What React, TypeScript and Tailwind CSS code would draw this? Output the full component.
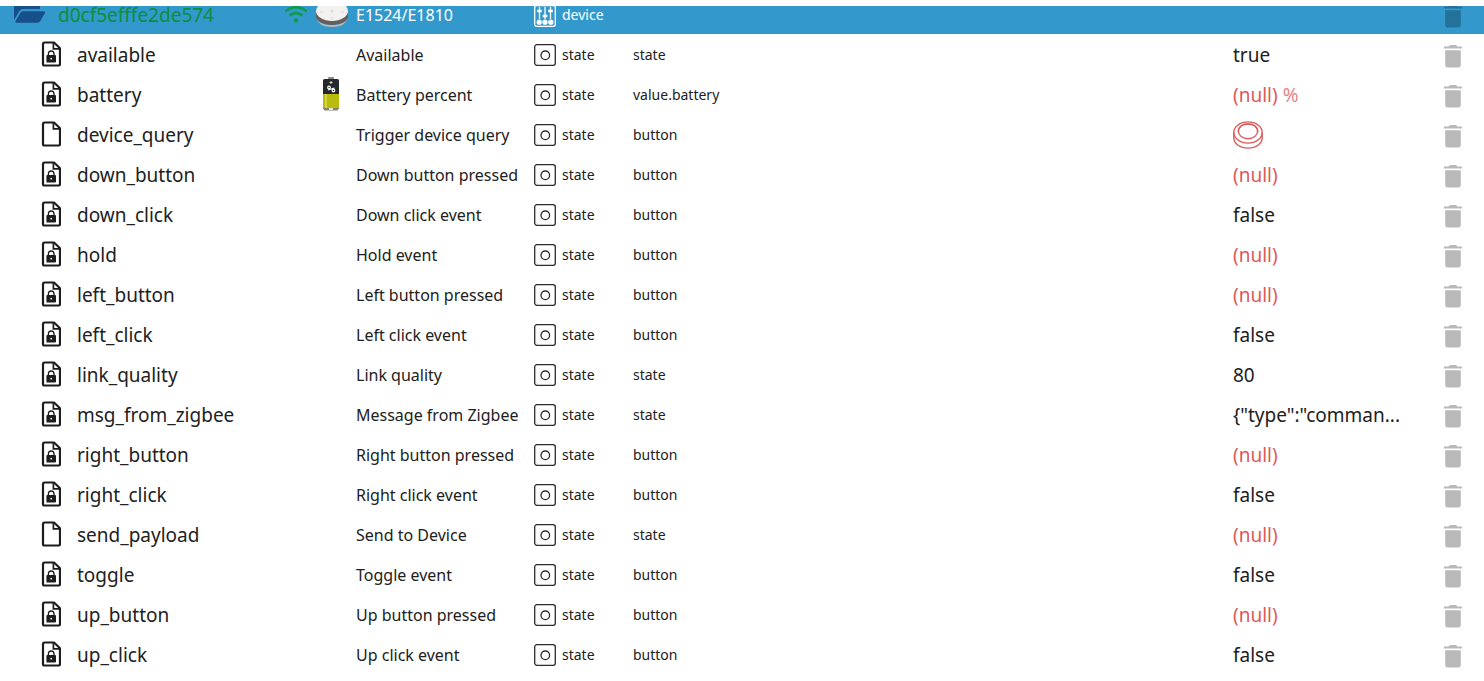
import clsx from "clsx";

type StateRow = {
    id: string;
    name: string;
    role: string;
    value: string | null;
    unit?: string;
    writable?: boolean;
    isButton?: boolean;
    battery?: boolean;
};

const rows: StateRow[] = [
    { id: "available", name: "Available", role: "state", value: "true" },
    { id: "battery", name: "Battery percent", role: "value.battery", value: null, unit: "%", battery: true },
    { id: "device_query", name: "Trigger device query", role: "button", value: null, writable: true, isButton: true },
    { id: "down_button", name: "Down button pressed", role: "button", value: null },
    { id: "down_click", name: "Down click event", role: "button", value: "false" },
    { id: "hold", name: "Hold event", role: "button", value: null },
    { id: "left_button", name: "Left button pressed", role: "button", value: null },
    { id: "left_click", name: "Left click event", role: "button", value: "false" },
    { id: "link_quality", name: "Link quality", role: "state", value: "80" },
    { id: "msg_from_zigbee", name: "Message from Zigbee", role: "state", value: '{"type":"comman...' },
    { id: "right_button", name: "Right button pressed", role: "button", value: null },
    { id: "right_click", name: "Right click event", role: "button", value: "false" },
    { id: "send_payload", name: "Send to Device", role: "state", value: null, writable: true },
    { id: "toggle", name: "Toggle event", role: "button", value: "false" },
    { id: "up_button", name: "Up button pressed", role: "button", value: null },
    { id: "up_click", name: "Up click event", role: "button", value: "false" },
];

function FileIcon({ locked }: { locked: boolean }) {
    return (
        <svg width="20" height="26" viewBox="0 0 20 26" fill="none" className="shrink-0">
            <path d="M3.500 1.500h9.500l6 5.800V23a1.500 1.500 0 0 1-1.500 1.500h-14A1.500 1.500 0 0 1 2 23V3a1.500 1.500 0 0 1 1.500-1.500Z" stroke="#1c1c1c" strokeWidth="2.200" />
            <path d="M12.400 1.500v6.300H19" stroke="#1c1c1c" strokeWidth="1.700" />
            {locked && (
                <>
                    <path d="M7.400 14.500V13a2.800 3 0 0 1 5.600 0v1.500" stroke="#1c1c1c" strokeWidth="1.300" />
                    <rect x="5.400" y="14" width="9.600" height="7.400" rx="1" fill="#1c1c1c" />
                    <circle cx="10.200" cy="17.700" r=".9" fill="#fff" />
                </>
            )}
        </svg>
    );
}

function FolderIcon() {
    return (
        <svg width="32" height="24" viewBox="0 0 32 24" fill="#164f8a" className="shrink-0">
            <path d="M0 3a2 2 0 0 1 2-2h8l3 3h11a2 2 0 0 1 2 2v3H9a4 4 0 0 0-3.500 2L0 20Z" />
            <path d="M9.800 11.200h20.200a1.200 1.200 0 0 1 1 1.800l-5 8.600a2.400 2.400 0 0 1-2 1.100H2.600a1.200 1.200 0 0 1-1.100-1.800l5.200-8.300a3.400 3.400 0 0 1 3.100-1.400Z" />
        </svg>
    );
}

function WifiIcon() {
    return (
        <svg width="24" height="20" viewBox="0 0 24 20" fill="none" stroke="#0f9a4a" strokeWidth="2.600" className="shrink-0">
            <path d="M1.500 7.400a15 15 0 0 1 21 0" />
            <path d="M5.600 11.700a9.200 9.200 0 0 1 12.800 0" />
            <circle cx="12" cy="16.500" r="2.200" fill="#0f9a4a" stroke="none" />
        </svg>
    );
}

function RemoteImage() {
    return (
        <svg width="34" height="30" viewBox="0 2 34 30" className="shrink-0">
            <path d="M1 15v6c1 5 8 8 16 8s15-3 16-8v-6Z" fill="#645e5c" />
            <path d="M2 23c2 4 8 6 15 6s13-2 15-6c-1 5-7 8-15 8S3 28 2 23Z" fill="#bdb8b5" />
            <ellipse cx="17" cy="15" rx="16" ry="10" fill="#f3f1ef" />
            <circle cx="17" cy="15" r="1.600" fill="#dedcda" />
            <path d="M5 16h3M26 16h3M17 21v2" stroke="#d5d2d0" />
        </svg>
    );
}

function BatteryImage() {
    return (
        <svg width="16" height="34" viewBox="0 0 16 34">
            <rect x="5" y="0" width="6" height="4" rx="1" fill="#8c8c8c" />
            <rect x="0" y="2" width="16" height="30" rx="1.500" fill="#25272a" />
            <rect x="0" y="17" width="16" height="14" fill="#b9bc0c" />
            <path d="M3 17v14" stroke="#d3d53a" strokeWidth="2" />
            <rect x="1" y="31" width="14" height="2.400" rx="1" fill="#85836a" />
            <rect x="6" y="31" width="4" height="2" fill="#e6e6de" />
            <path d="M8 4v3M6.500 5.500h3" stroke="#d8d8d8" />
            <g stroke="#fff" strokeWidth="1.200" fill="none">
                <circle cx="6" cy="10.500" r="1.300" />
                <circle cx="10.500" cy="13.500" r="1.300" />
                <path d="m5 13 6.500-2" />
            </g>
        </svg>
    );
}

function DeviceIcon() {
    return (
        <svg width="22" height="22" viewBox="0 0 22 22" fill="#fff" stroke="#fff" className="shrink-0">
            <rect x=".7" y=".7" width="20.600" height="20.600" rx="2" fill="none" strokeWidth="1.300" />
            <path d="M5.500 2v12M11 2v12M16.500 2v12" strokeWidth="1.300" />
            <path d="M3.200 6h4.600M8.700 11h4.600M14.200 6h4.600" strokeWidth="2.400" />
            <g stroke="none">
                <circle cx="5.200" cy="17.200" r="2.600" />
                <circle cx="11" cy="17.200" r="2.600" />
                <circle cx="16.800" cy="17.200" r="2.600" />
            </g>
        </svg>
    );
}

function StateIcon() {
    return (
        <svg width="22" height="22" viewBox="0 0 22 22" fill="none" stroke="#2b2b2b" strokeWidth="1.300">
            <rect x=".7" y=".7" width="20.600" height="20.600" rx="2.200" />
            <circle cx="11.300" cy="11.300" r="4.300" />
        </svg>
    );
}

function PushButtonIcon() {
    return (
        <svg width="30" height="28" viewBox="0 0 30 28" fill="none" stroke="#dc5a5a" strokeWidth="1.400">
            <ellipse cx="15" cy="11.500" rx="14.200" ry="10.600" />
            <ellipse cx="15" cy="10.300" rx="9.600" ry="7.400" />
            <path d="M5.200 11C5.200 5.600 9.600 3 15 3s9.800 2.600 9.800 8" />
            <path d="M.8 11.500v5.300c0 6 6.400 10.300 14.200 10.300s14.200-4.300 14.200-10.300v-5.300" />
        </svg>
    );
}

function DeleteButton({ label, dark }: { label: string; dark?: boolean }) {
    return (
        <button type="button" aria-label={`Delete ${label}`} className="block shrink-0 cursor-pointer">
            <svg width="18" height="23" viewBox="0 0 18 23" className={clsx("block", dark ? "fill-[#24719a]" : "fill-[#b9b9b9]")}>
                <path d="M0 1.400h4.800L6 0h6l1.200 1.400H18v2.200H0Z" />
                <path d="M1.200 5.200h15.600v15a2.300 2.300 0 0 1-2.300 2.300h-11a2.300 2.300 0 0 1-2.300-2.300Z" />
            </svg>
        </button>
    );
}

function ValueCell({ row }: { row: StateRow }) {
    if (row.isButton) {
        return (
            <button type="button" aria-label={row.name} className="block cursor-pointer">
                <PushButtonIcon />
            </button>
        );
    }
    return (
        <span className={clsx(row.value === null && "text-[#dc5a5a]")}>
            {row.value ?? "(null)"}
            {row.unit && <span className="opacity-75"> {row.unit}</span>}
        </span>
    );
}

export default function App() {
    return (
        <main className="bg-white pt-1.5 font-['Noto_Sans','Open_Sans',sans-serif] text-[#212121]">
            <table className="w-full table-fixed whitespace-nowrap text-left">
                <colgroup>
                    <col className="w-[312px]" />
                    <col className="w-11" />
                    <col className="w-[178px]" />
                    <col className="w-[99px]" />
                    <col />
                    <col className="w-[211px]" />
                    <col className="w-10" />
                </colgroup>
                {/* the device row is short, its icons stick to the bottom and lose their tops */}
                <thead>
                    <tr className="h-7 bg-[#3399cc] align-top text-white">
                        <th className="p-0 font-normal">
                            <div className="flex items-start pr-1 pl-3.5">
                                <span className="flex h-[18px] items-end overflow-hidden">
                                    <FolderIcon />
                                </span>
                                <span className="flex-1 pl-3 text-[19px] leading-[18px] text-[#0b8f3a]">d0cf5efffe2de574</span>
                                <span className="flex h-[18px] items-end overflow-hidden">
                                    <WifiIcon />
                                </span>
                            </div>
                        </th>
                        <th className="p-0 pl-[3px]">
                            <span className="flex h-[22px] items-end overflow-hidden">
                                <RemoteImage />
                            </span>
                        </th>
                        <th className="p-0 text-base leading-[18px] font-normal">E1524/E1810</th>
                        <th className="p-0 font-normal">
                            <div className="flex items-start gap-1.5 text-sm leading-[18px]">
                                <span className="flex h-[21px] items-end overflow-hidden">
                                    <DeviceIcon />
                                </span>
                                device
                            </div>
                        </th>
                        <td className="p-0" />
                        <td className="p-0" />
                        <td className="p-0">
                            <div className="flex h-[22px] items-end overflow-hidden">
                                <DeleteButton label="d0cf5efffe2de574" dark />
                            </div>
                        </td>
                    </tr>
                </thead>
                <tbody>
                    {rows.map((row) => (
                        <tr key={row.id} className="h-10">
                            <td className="p-0">
                                <div className="flex items-center gap-4 pl-[41px] text-[19px] leading-6">
                                    <FileIcon locked={!row.writable} />
                                    <span className="pt-0.5">{row.id}</span>
                                </div>
                            </td>
                            <td className="p-0 pl-[11px]">{row.battery && <BatteryImage />}</td>
                            <td className="p-0 pt-0.5 text-base">{row.name}</td>
                            <td className="p-0 pt-0.5">
                                <div className="flex items-center gap-1.5 text-sm">
                                    <StateIcon />
                                    state
                                </div>
                            </td>
                            <td className="p-0 pt-0.5 text-sm">{row.role}</td>
                            <td className="p-0 pt-0.5 text-[19px] leading-6">
                                <ValueCell row={row} />
                            </td>
                            <td className="p-0 pt-1">
                                <DeleteButton label={row.id} />
                            </td>
                        </tr>
                    ))}
                </tbody>
            </table>
        </main>
    );
}
